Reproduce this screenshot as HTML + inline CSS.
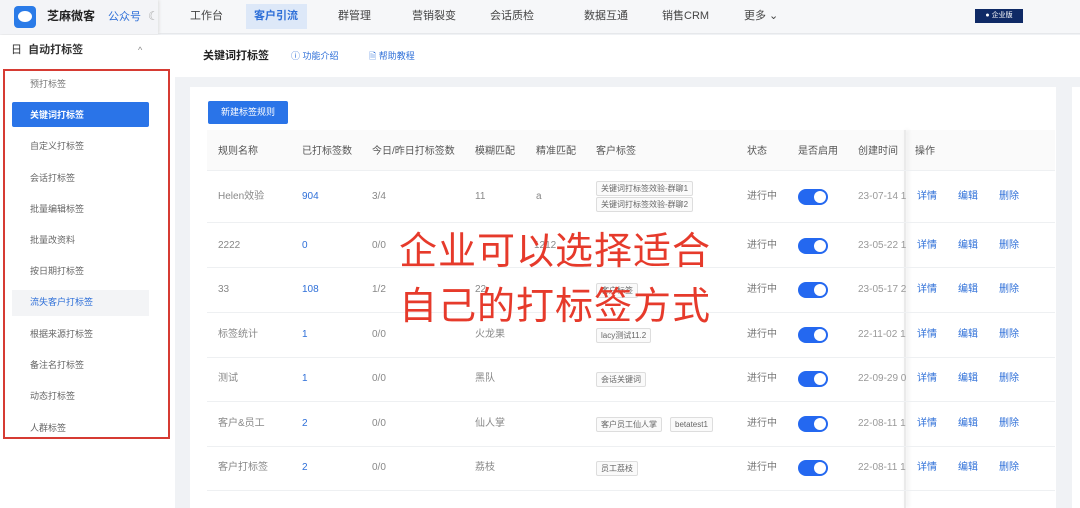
<!DOCTYPE html>
<html><head><meta charset="utf-8"><style>
*{margin:0;padding:0;box-sizing:border-box}
body{width:1080px;height:508px;overflow:hidden;background:#f0f2f5;font-family:"Liberation Sans","Noto Sans CJK SC",sans-serif;font-size:11px;color:#555;position:relative}
.a{position:absolute;white-space:nowrap;line-height:12px}
.top{position:absolute;left:0;top:0;width:1080px;height:34px;background:#f6f7f9;border-bottom:1px solid #e6e8eb}
.side{position:absolute;left:0;top:35px;width:175px;height:473px;background:#fff}
.sub{position:absolute;left:175px;top:35px;width:905px;height:42px;background:#fff}
.card{position:absolute;left:190px;top:87px;width:866px;height:421px;background:#fff}
.blue{color:#2e6fd8}
.tag{position:absolute;border:1px solid #ddd;background:#fafafa;border-radius:2px;font-size:8px;color:#666;padding:0 4px;height:15px;line-height:13px;white-space:nowrap}
.sw{position:absolute;left:798px;width:30px;height:16px;border-radius:8px;background:#2468f0}
.sw:after{content:"";position:absolute;right:2px;top:2px;width:12px;height:12px;border-radius:50%;background:#fff}
.line{position:absolute;left:207px;width:848px;height:1px;background:#eef0f2}
.red{position:absolute;left:399px;font-size:38px;color:#e63a2b;letter-spacing:1px;font-family:"Noto Sans CJK SC",sans-serif;line-height:40px;white-space:nowrap}
.s{font-size:9px;color:#666;left:30px}
.t{font-size:10px}
.g{color:#888}
</style></head><body>
<div class="top"></div>
<div class="a" style="left:0;top:0;width:158px;height:34px;background:#f3f4f7;box-shadow:1px 0 3px #ddd"></div>
<div class="a" style="left:14px;top:6px;width:22px;height:22px;background:#2a7be8;border-radius:4px"></div>
<div class="a" style="left:18px;top:11px;width:14px;height:11px;background:#fff;border-radius:50%"></div>
<div class="a" style="left:47px;top:10px;font-size:12px;font-weight:bold;color:#222">芝麻微客</div>
<div class="a blue" style="left:108px;top:11px;font-size:11px">公众号</div>
<div class="a" style="left:148px;top:10px;color:#aaa;font-size:12px">☾</div>
<div class="a" style="left:190px;top:10px;color:#444">工作台</div>
<div class="a" style="left:246px;top:4px;width:61px;height:25px;background:#dde8f8"></div>
<div class="a blue" style="left:254px;top:10px;font-weight:bold">客户引流</div>
<div class="a" style="left:338px;top:10px;color:#444">群管理</div>
<div class="a" style="left:412px;top:10px;color:#444">营销裂变</div>
<div class="a" style="left:490px;top:10px;color:#444">会话质检</div>
<div class="a" style="left:584px;top:10px;color:#444">数据互通</div>
<div class="a" style="left:662px;top:10px;color:#444">销售CRM</div>
<div class="a" style="left:744px;top:10px;color:#444">更多 ⌄</div>
<div class="a" style="left:975px;top:9px;width:48px;height:14px;background:#0f2a66;color:#fff;font-size:7px;line-height:14px;text-align:center">● 企业版</div>

<div class="side"></div>
<div class="a" style="left:11px;top:44px;font-size:11px;color:#333">日&nbsp; <b>自动打标签</b></div>
<div class="a" style="left:138px;top:44px;color:#888;font-size:9px">^</div>
<div class="a" style="left:3px;top:69px;width:167px;height:370px;border:2px solid #d63b33"></div>
<div class="a s" style="top:78px;color:#777">预打标签</div>
<div class="a" style="left:12px;top:102px;width:137px;height:25px;background:#2a74e8;border-radius:2px"></div>
<div class="a s" style="top:109px;color:#fff;font-weight:bold">关键词打标签</div>
<div class="a s" style="top:140px">自定义打标签</div>
<div class="a s" style="top:172px">会话打标签</div>
<div class="a s" style="top:203px">批量编辑标签</div>
<div class="a s" style="top:234px">批量改资料</div>
<div class="a s" style="top:265px">按日期打标签</div>
<div class="a" style="left:12px;top:290px;width:137px;height:26px;background:#f3f4f6"></div>
<div class="a s blue" style="top:296px;color:#2e6fd8">流失客户打标签</div>
<div class="a s" style="top:328px">根据来源打标签</div>
<div class="a s" style="top:359px">备注名打标签</div>
<div class="a s" style="top:390px">动态打标签</div>
<div class="a s" style="top:422px">人群标签</div>

<div class="sub"></div>
<div class="a" style="left:203px;top:50px;font-size:11px;font-weight:bold;color:#222">关键词打标签</div>
<div class="a blue" style="left:291px;top:50px;font-size:9px">ⓘ 功能介绍</div>
<div class="a blue" style="left:369px;top:50px;font-size:9px">🗎 帮助教程</div>

<div class="card"></div>
<div class="a" style="left:208px;top:101px;width:80px;height:23px;background:#2a74e8;border-radius:2px;color:#fff;font-size:9px;line-height:23px;text-align:center">新建标签规则</div>
<div class="a" style="left:207px;top:130px;width:848px;height:40px;background:#fafafa"></div>
<div class="a t" style="left:218px;top:146px">规则名称</div>
<div class="a t" style="left:302px;top:146px">已打标签数</div>
<div class="a t" style="left:372px;top:146px">今日/昨日打标签数</div>
<div class="a t" style="left:475px;top:146px">模糊匹配</div>
<div class="a t" style="left:536px;top:146px">精准匹配</div>
<div class="a t" style="left:596px;top:146px">客户标签</div>
<div class="a t" style="left:747px;top:146px">状态</div>
<div class="a t" style="left:798px;top:146px">是否启用</div>
<div class="a t" style="left:858px;top:146px">创建时间</div>
<div class="a t" style="left:915px;top:146px">操作</div>
<div class="a" style="left:904px;top:130px;width:2px;height:378px;background:#eaeaea;box-shadow:2px 0 4px #e4e4e4"></div>

<div class="line" style="top:170px"></div><div class="line" style="top:222px"></div><div class="line" style="top:267px"></div><div class="line" style="top:312px"></div><div class="line" style="top:357px"></div><div class="line" style="top:401px"></div><div class="line" style="top:446px"></div><div class="line" style="top:490px"></div>

<div class="a t g" style="left:218px;top:191px">Helen效验</div>
<div class="a t blue" style="left:302px;top:191px">904</div>
<div class="a t g" style="left:372px;top:191px">3/4</div>
<div class="a t g" style="left:475px;top:191px">11</div>
<div class="a t g" style="left:536px;top:191px">a</div>
<div class="tag" style="left:596px;top:181px">关键词打标签效验-群聊1</div>
<div class="tag" style="left:596px;top:197px">关键词打标签效验-群聊2</div>

<div class="a t g" style="left:218px;top:240px">2222</div>
<div class="a t blue" style="left:302px;top:240px">0</div>
<div class="a t g" style="left:372px;top:240px">0/0</div>
<div class="a t g" style="left:534px;top:240px">1212</div>

<div class="a t g" style="left:218px;top:284px">33</div>
<div class="a t blue" style="left:302px;top:284px">108</div>
<div class="a t g" style="left:372px;top:284px">1/2</div>
<div class="a t g" style="left:475px;top:284px">22</div>
<div class="tag" style="left:596px;top:283px">客户标签</div>

<div class="a t g" style="left:218px;top:329px">标签统计</div>
<div class="a t blue" style="left:302px;top:329px">1</div>
<div class="a t g" style="left:372px;top:329px">0/0</div>
<div class="a t g" style="left:475px;top:329px">火龙果</div>
<div class="tag" style="left:596px;top:328px">lacy测试11.2</div>

<div class="a t g" style="left:218px;top:373px">测试</div>
<div class="a t blue" style="left:302px;top:373px">1</div>
<div class="a t g" style="left:372px;top:373px">0/0</div>
<div class="a t g" style="left:475px;top:373px">黑队</div>
<div class="tag" style="left:596px;top:372px">会话关键词</div>

<div class="a t g" style="left:218px;top:418px">客户&amp;员工</div>
<div class="a t blue" style="left:302px;top:418px">2</div>
<div class="a t g" style="left:372px;top:418px">0/0</div>
<div class="a t g" style="left:475px;top:418px">仙人掌</div>
<div class="tag" style="left:596px;top:417px">客户员工仙人掌</div>
<div class="tag" style="left:670px;top:417px">betatest1</div>

<div class="a t g" style="left:218px;top:462px">客户打标签</div>
<div class="a t blue" style="left:302px;top:462px">2</div>
<div class="a t g" style="left:372px;top:462px">0/0</div>
<div class="a t g" style="left:475px;top:462px">荔枝</div>
<div class="tag" style="left:596px;top:461px">员工荔枝</div>

<div class="a t" style="left:747px;top:191px;color:#777">进行中</div><div class="sw" style="top:189px"></div><div class="a t" style="left:858px;top:191px;color:#999">23-07-14 1</div>
<div class="a t" style="left:747px;top:240px;color:#777">进行中</div><div class="sw" style="top:238px"></div><div class="a t" style="left:858px;top:240px;color:#999">23-05-22 1</div>
<div class="a t" style="left:747px;top:284px;color:#777">进行中</div><div class="sw" style="top:282px"></div><div class="a t" style="left:858px;top:284px;color:#999">23-05-17 2</div>
<div class="a t" style="left:747px;top:329px;color:#777">进行中</div><div class="sw" style="top:327px"></div><div class="a t" style="left:858px;top:329px;color:#999">22-11-02 1</div>
<div class="a t" style="left:747px;top:373px;color:#777">进行中</div><div class="sw" style="top:371px"></div><div class="a t" style="left:858px;top:373px;color:#999">22-09-29 0</div>
<div class="a t" style="left:747px;top:418px;color:#777">进行中</div><div class="sw" style="top:416px"></div><div class="a t" style="left:858px;top:418px;color:#999">22-08-11 1</div>
<div class="a t" style="left:747px;top:462px;color:#777">进行中</div><div class="sw" style="top:460px"></div><div class="a t" style="left:858px;top:462px;color:#999">22-08-11 1</div>

<div class="a t blue" style="left:917px;top:191px">详情</div><div class="a t blue" style="left:958px;top:191px">编辑</div><div class="a t blue" style="left:999px;top:191px">删除</div>
<div class="a t blue" style="left:917px;top:240px">详情</div><div class="a t blue" style="left:958px;top:240px">编辑</div><div class="a t blue" style="left:999px;top:240px">删除</div>
<div class="a t blue" style="left:917px;top:284px">详情</div><div class="a t blue" style="left:958px;top:284px">编辑</div><div class="a t blue" style="left:999px;top:284px">删除</div>
<div class="a t blue" style="left:917px;top:329px">详情</div><div class="a t blue" style="left:958px;top:329px">编辑</div><div class="a t blue" style="left:999px;top:329px">删除</div>
<div class="a t blue" style="left:917px;top:373px">详情</div><div class="a t blue" style="left:958px;top:373px">编辑</div><div class="a t blue" style="left:999px;top:373px">删除</div>
<div class="a t blue" style="left:917px;top:418px">详情</div><div class="a t blue" style="left:958px;top:418px">编辑</div><div class="a t blue" style="left:999px;top:418px">删除</div>
<div class="a t blue" style="left:917px;top:462px">详情</div><div class="a t blue" style="left:958px;top:462px">编辑</div><div class="a t blue" style="left:999px;top:462px">删除</div>

<div class="a" style="left:1072px;top:87px;width:8px;height:421px;background:#fff"></div>

<div class="red" style="top:228px">企业可以选择适合</div>
<div class="red" style="top:283px">自己的打标签方式</div>
</body></html>
